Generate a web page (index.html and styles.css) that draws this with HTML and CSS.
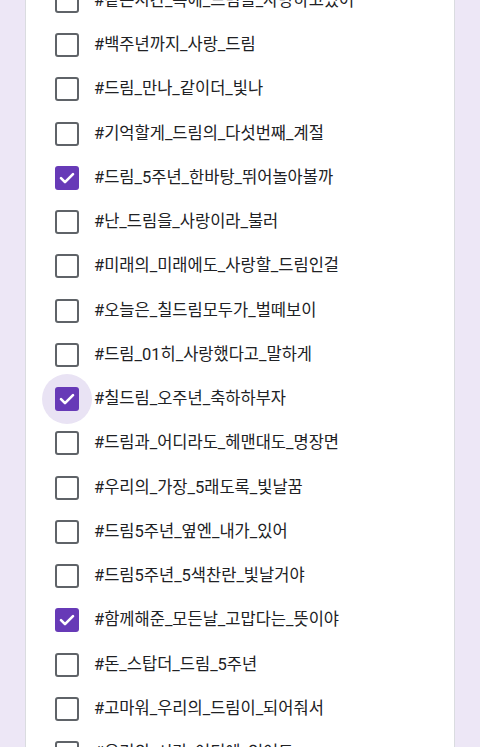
FILE: index.html
```html
<!DOCTYPE html>
<html lang="ko">
<head>
<meta charset="utf-8">
<link rel="stylesheet" href="styles.css">
</head>
<body>
<div class="card">
  <ul class="list">
    <li class="row"><span class="box"></span><span class="label">#같은시간_속에_드림을_사랑하고있어</span></li>
    <li class="row"><span class="box"></span><span class="label">#백주년까지_사랑_드림</span></li>
    <li class="row"><span class="box"></span><span class="label">#드림_만나_같이더_빛나</span></li>
    <li class="row"><span class="box"></span><span class="label">#기억할게_드림의_다섯번째_계절</span></li>
    <li class="row"><span class="box checked"><svg viewBox="0 0 24 24"><path d="M6 12.2l4 4 8-8"/></svg></span><span class="label">#드림_5주년_한바탕_뛰어놀아볼까</span></li>
    <li class="row"><span class="box"></span><span class="label">#난_드림을_사랑이라_불러</span></li>
    <li class="row"><span class="box"></span><span class="label">#미래의_미래에도_사랑할_드림인걸</span></li>
    <li class="row"><span class="box"></span><span class="label">#오늘은_칠드림모두가_벌떼보이</span></li>
    <li class="row"><span class="box"></span><span class="label">#드림_01히_사랑했다고_말하게</span></li>
    <li class="row"><span class="box checked focused"><svg viewBox="0 0 24 24"><path d="M6 12.2l4 4 8-8"/></svg></span><span class="label">#칠드림_오주년_축하하부자</span></li>
    <li class="row"><span class="box"></span><span class="label">#드림과_어디라도_헤맨대도_명장면</span></li>
    <li class="row"><span class="box"></span><span class="label">#우리의_가장_5래도록_빛날꿈</span></li>
    <li class="row"><span class="box"></span><span class="label">#드림5주년_옆엔_내가_있어</span></li>
    <li class="row"><span class="box"></span><span class="label">#드림5주년_5색찬란_빛날거야</span></li>
    <li class="row"><span class="box checked"><svg viewBox="0 0 24 24"><path d="M6 12.2l4 4 8-8"/></svg></span><span class="label">#함께해준_모든날_고맙다는_뜻이야</span></li>
    <li class="row"><span class="box"></span><span class="label">#돈_스탑더_드림_5주년</span></li>
    <li class="row"><span class="box"></span><span class="label">#고마워_우리의_드림이_되어줘서</span></li>
    <li class="row"><span class="box"></span><span class="label">#우리의_시간_어디에_있어도</span></li>
  </ul>
</div>
</body>
</html>
```
FILE: styles.css
```css
html, body {
  margin: 0;
  padding: 0;
  background: #ede7f6;
  height: 100%;
  overflow: hidden;
}
body {
  font-family: "Roboto", "Noto Sans CJK KR", sans-serif;
  color: #202124;
}
.card {
  position: relative;
  z-index: 0;
  margin: -21.4px 25px 0 25px;
  background: #fff;
  border-left: 1px solid #dadce0;
  border-right: 1px solid #dadce0;
  min-height: 900px;
}
.list {
  list-style: none;
  margin: 0;
  padding: 0 0 0 29px;
}
.row {
  display: flex;
  align-items: center;
  height: 44.27px;
  gap: 16px;
}
.box {
  position: relative;
  flex: none;
  box-sizing: border-box;
  width: 24px;
  height: 24px;
  border: 2.5px solid #5f6368;
  border-radius: 3px;
  background: #fff;
}
.box.checked {
  border: none;
  background: #673ab7;
}
.box svg {
  position: absolute;
  left: 0;
  top: 0;
  width: 24px;
  height: 24px;
  fill: none;
  stroke: #fff;
  stroke-width: 2.6;
  stroke-linecap: round;
  stroke-linejoin: round;
}
.box.focused::before {
  content: "";
  position: absolute;
  left: -13px;
  top: -13px;
  width: 50px;
  height: 50px;
  border-radius: 50%;
  background: #e9e3f4;
  z-index: -1;
}
.label {
  font-size: 16.5px;
  line-height: 22px;
  white-space: nowrap;
  margin-left: -1px;
}
```
